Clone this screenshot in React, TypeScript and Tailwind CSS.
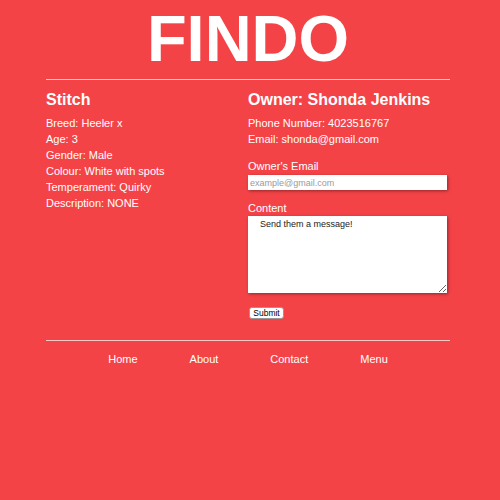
const details = [
  "Breed: Heeler x",
  "Age: 3",
  "Gender: Male",
  "Colour: White with spots",
  "Temperament: Quirky",
  "Description: NONE",
];

const links = ["Home", "About", "Contact", "Menu"];

const App = () => {
  return (
    <div
      className="min-h-[500px] w-full bg-[#f44347] text-white"
      style={{ fontFamily: "'Liberation Sans', Arial, sans-serif" }}
    >
      <div className="ml-[46px] w-[404px]">
        <h1 className="pt-[6px] text-center text-[65px] font-bold leading-[65px]">FINDO</h1>

        <div className="mt-[8px] h-px bg-white/70" />

        <div className="mt-[10px] grid grid-cols-2">
          {/* dog */}
          <div>
            <h2 className="text-[16px] font-bold leading-[20px]">Stitch</h2>
            <ul className="mt-[5px] text-[11px] leading-[16px]">
              {details.map((d) => (
                <li key={d}>{d}</li>
              ))}
            </ul>
          </div>

          {/* owner + form */}
          <div>
            <h2 className="text-[16px] font-bold leading-[20px]">Owner: Shonda Jenkins</h2>
            <p className="mt-[5px] text-[11px] leading-[16px]">Phone Number: 4023516767</p>
            <p className="text-[11px] leading-[16px]">Email: shonda@gmail.com</p>

            <form className="flex flex-col items-start">
              <label className="mt-[11px] text-[11px] leading-[16px]">Owner's Email</label>
              <input
                type="email"
                placeholder="example@gmail.com"
                className="mt-px h-[15px] w-[199px] bg-white px-[2px] text-[9px] text-gray-800 shadow-[1px_1px_3px_rgba(0,0,0,0.4)] outline-none placeholder:text-[#9a9a9a]"
              />
              <label className="mt-[10px] text-[11px] leading-[16px]">Content</label>
              <textarea
                defaultValue="Send them a message!"
                className="h-[77px] w-[199px] bg-white pl-[12px] pt-[3px] text-[9px] leading-[11px] text-[#222] shadow-[1px_1px_3px_rgba(0,0,0,0.4)] outline-none"
              />
              <button
                type="button"
                className="ml-px mt-[14px] h-[12px] w-[35px] rounded-[3px] border border-[#999] bg-white text-[8.5px] leading-[10px] text-black"
              >
                Submit
              </button>
            </form>
          </div>
        </div>

        <div className="mt-[21px] h-px bg-white/70" />

        <nav className="mt-[10px] flex justify-center gap-[52px] text-[11px] leading-[16px]">
          {links.map((l) => (
            <a key={l} href="#">
              {l}
            </a>
          ))}
        </nav>
      </div>
    </div>
  );
};

export default App;
